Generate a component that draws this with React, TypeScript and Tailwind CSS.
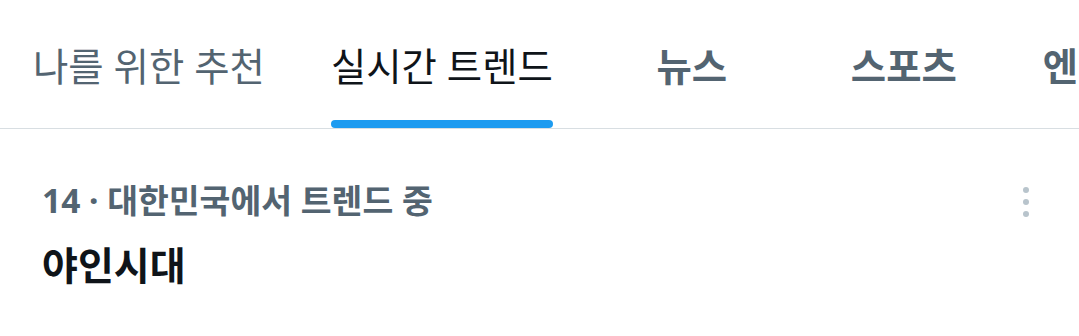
import { useState } from "react";

const tabs = [
  { label: "나를 위한 추천", bold: false },
  { label: "실시간 트렌드", bold: false },
  { label: "뉴스", bold: true },
  { label: "스포츠", bold: true },
  { label: "엔터테인먼트", bold: true },
];

export default function App() {
  const [active, setActive] = useState(1);

  return (
    <div
      className="w-[1079px] h-[336px] overflow-hidden bg-white"
      style={{ fontFamily: '"Noto Sans", "Noto Sans CJK KR", sans-serif' }}
    >
      {/* tab bar */}
      <div className="flex h-[129px] border-b border-[#d8dee2] overflow-hidden whitespace-nowrap">
        {tabs.map((tab, i) => (
          <button
            key={tab.label}
            onClick={() => setActive(i)}
            className={`relative flex-none flex justify-center items-start pt-[38px] px-[33px] text-[38.4px] leading-[57px] ${
              i >= 2 ? "min-w-[212px]" : ""
            } ${i === active ? "text-[#0f1419]" : "text-[#536471]"} ${
              tab.bold ? "font-bold" : "font-normal"
            }`}
          >
            <span className="relative block h-[91px]">
              {tab.label}
              {i === active && (
                <span className="absolute left-0 right-0 bottom-[1px] h-[8px] rounded-full bg-[#1d9bf0]" />
              )}
            </span>
          </button>
        ))}
      </div>

      {/* trend item */}
      <div className="flex justify-between pl-[42px] pr-[50px] pt-[47px]">
        <div>
          <div className="text-[33.5px] leading-[48px] font-bold text-[#536471]">
            14 · 대한민국에서 트렌드 중
          </div>
          <div className="mt-[12px] text-[39px] leading-[58px] font-bold text-[#0f1419]">
            야인시대
          </div>
        </div>
        <div className="flex flex-col items-center gap-[6px] pt-[11px]">
          <span className="w-[6px] h-[6px] rounded-full bg-[#b8c4cc]" />
          <span className="w-[6px] h-[6px] rounded-full bg-[#b8c4cc]" />
          <span className="w-[6px] h-[6px] rounded-full bg-[#b8c4cc]" />
        </div>
      </div>
    </div>
  );
}
